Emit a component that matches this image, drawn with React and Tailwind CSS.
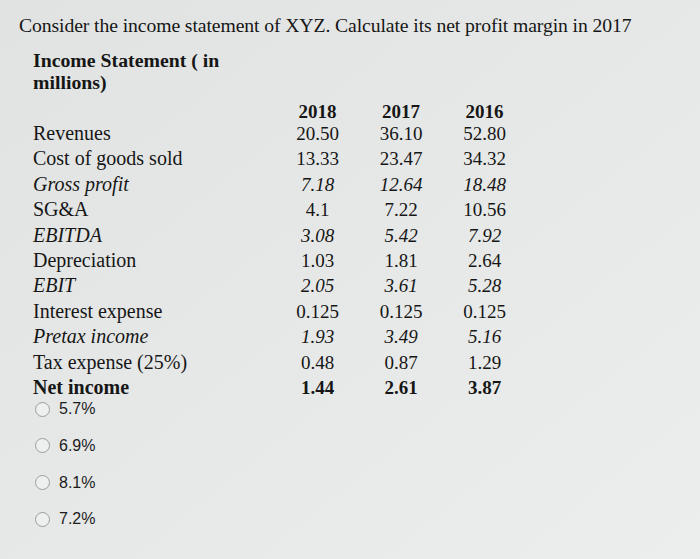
export default function App() {
  const rows = [
    { label: "Revenues", v: ["20.50", "36.10", "52.80"], s: "" },
    { label: "Cost of goods sold", v: ["13.33", "23.47", "34.32"], s: "" },
    { label: "Gross profit", v: ["7.18", "12.64", "18.48"], s: "italic" },
    { label: "SG&A", v: ["4.1", "7.22", "10.56"], s: "" },
    { label: "EBITDA", v: ["3.08", "5.42", "7.92"], s: "italic" },
    { label: "Depreciation", v: ["1.03", "1.81", "2.64"], s: "" },
    { label: "EBIT", v: ["2.05", "3.61", "5.28"], s: "italic" },
    { label: "Interest expense", v: ["0.125", "0.125", "0.125"], s: "" },
    { label: "Pretax income", v: ["1.93", "3.49", "5.16"], s: "italic" },
    { label: "Tax expense (25%)", v: ["0.48", "0.87", "1.29"], s: "" },
    { label: "Net income", v: ["1.44", "2.61", "3.87"], s: "bold" },
  ];
  const opts = ["5.7%", "6.9%", "8.1%", "7.2%"];
  const serif = "font-['Liberation_Serif',serif]";
  return (
    <div className="w-[700px] h-[559px] overflow-hidden bg-gradient-to-br from-[#e1e3e2] to-[#eceeed] text-[#161616]">
      <div className={`${serif} text-[19.7px] leading-[24px] pl-[19px] pt-[13px] tracking-[-0.1px]`}>
        Consider the income statement of XYZ. Calculate its net profit margin in 2017
      </div>
      <div className={`${serif} font-bold text-[19.8px] leading-[22px] pl-[33px] pt-[12px] w-[240px]`}>
        Income Statement ( in millions)
      </div>
      <div className={`${serif} text-[20px] pl-[33px] pt-[6px]`}>
        <div className="flex h-[21px] items-end leading-[16px] font-bold text-[19px]">
          <div className="w-[243px]"></div>
          <div className="w-[83px] text-center">2018</div>
          <div className="w-[84px] text-center">2017</div>
          <div className="w-[83px] text-center">2016</div>
        </div>
        {rows.map((r) => (
          <div
            key={r.label}
            className={`flex h-[25.4px] items-baseline pt-[2px] leading-[22px] ${r.s === "italic" ? "italic" : ""} ${r.s === "bold" ? "font-bold" : ""}`}
          >
            <div className="w-[243px]">{r.label}</div>
            <div className="w-[83px] text-center text-[19px]">{r.v[0]}</div>
            <div className="w-[84px] text-center text-[19px]">{r.v[1]}</div>
            <div className="w-[83px] text-center text-[19px]">{r.v[2]}</div>
          </div>
        ))}
      </div>
      <div className="pl-[35px] font-['Liberation_Sans',sans-serif] text-[16px] text-[#1c1c1c]">
        {opts.map((o, i) => (
          <div key={o} className={`flex items-center h-[22px] ${i === 0 ? "mt-[-1px]" : "mt-[14.7px]"}`}>
            <span className="w-[15px] h-[15px] rounded-full border border-[#9c9e9d] bg-[#eef0ef]"></span>
            <span className="ml-[9px]">{o}</span>
          </div>
        ))}
      </div>
    </div>
  );
}
